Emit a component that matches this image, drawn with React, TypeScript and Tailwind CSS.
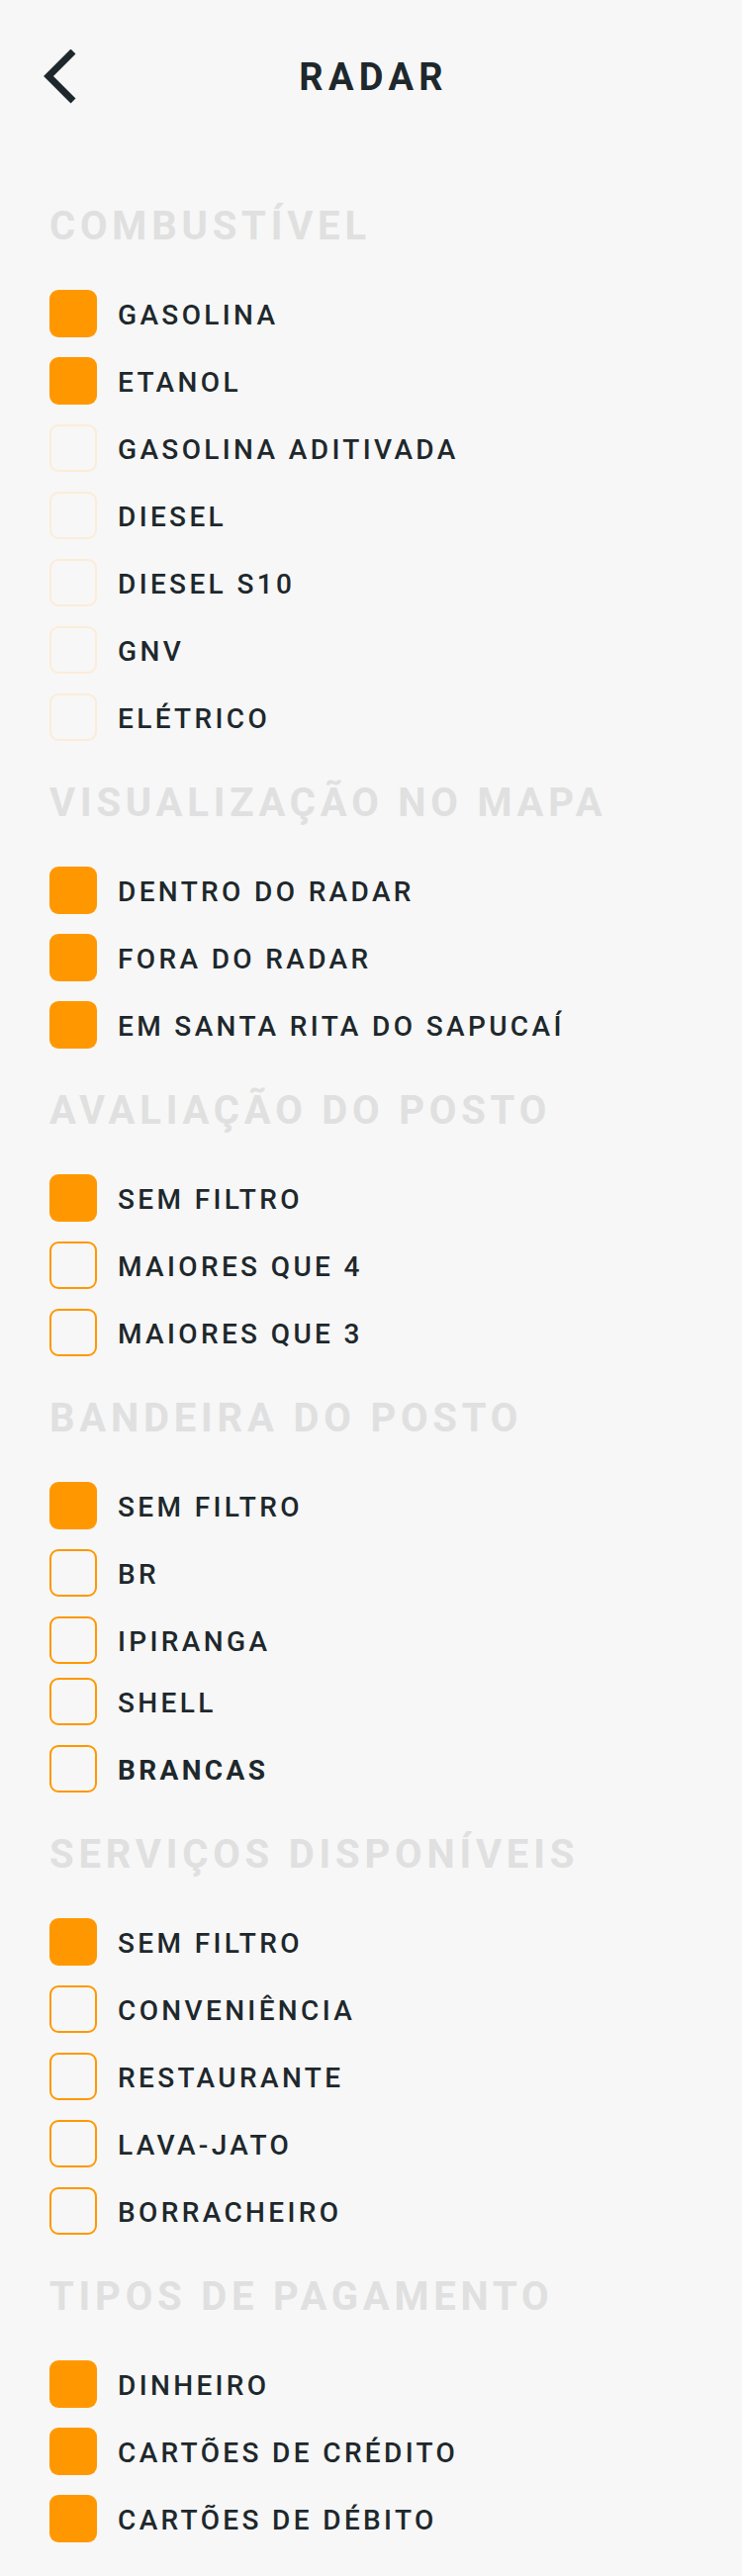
type Item = { label: string; checked: boolean; bold?: boolean; tight?: boolean }

type Section = { title: string; faint?: boolean; items: Item[] }

const sections: Section[] = [
  {
    title: 'COMBUSTÍVEL',
    faint: true,
    items: [
      { label: 'GASOLINA', checked: true },
      { label: 'ETANOL', checked: true },
      { label: 'GASOLINA ADITIVADA', checked: false },
      { label: 'DIESEL', checked: false },
      { label: 'DIESEL S10', checked: false },
      { label: 'GNV', checked: false },
      { label: 'ELÉTRICO', checked: false },
    ],
  },
  {
    title: 'VISUALIZAÇÃO NO MAPA',
    items: [
      { label: 'DENTRO DO RADAR', checked: true },
      { label: 'FORA DO RADAR', checked: true },
      { label: 'EM SANTA RITA DO SAPUCAÍ', checked: true },
    ],
  },
  {
    title: 'AVALIAÇÃO DO POSTO',
    items: [
      { label: 'SEM FILTRO', checked: true },
      { label: 'MAIORES QUE 4', checked: false },
      { label: 'MAIORES QUE 3', checked: false },
    ],
  },
  {
    title: 'BANDEIRA DO POSTO',
    items: [
      { label: 'SEM FILTRO', checked: true },
      { label: 'BR', checked: false },
      { label: 'IPIRANGA', checked: false },
      { label: 'SHELL', checked: false, tight: true },
      { label: 'BRANCAS', checked: false, bold: true },
    ],
  },
  {
    title: 'SERVIÇOS DISPONÍVEIS',
    items: [
      { label: 'SEM FILTRO', checked: true },
      { label: 'CONVENIÊNCIA', checked: false },
      { label: 'RESTAURANTE', checked: false },
      { label: 'LAVA-JATO', checked: false },
      { label: 'BORRACHEIRO', checked: false },
    ],
  },
  {
    title: 'TIPOS DE PAGAMENTO',
    items: [
      { label: 'DINHEIRO', checked: true },
      { label: 'CARTÕES DE CRÉDITO', checked: true },
      { label: 'CARTÕES DE DÉBITO', checked: true },
    ],
  },
]

function Box({ checked, faint }: { checked: boolean; faint?: boolean }) {
  if (checked) {
    return <div className="w-12 h-12 shrink-0 rounded-[9px] bg-[#ff9800]" />
  }
  return (
    <div
      className={
        faint
          ? 'w-12 h-12 shrink-0 rounded-[9px] border-2 border-[#fcecd8]'
          : 'w-12 h-12 shrink-0 rounded-[9px] border-2 border-[#ff9800]'
      }
    />
  )
}

export default function App() {
  return (
    <div className="min-h-screen w-full bg-[#f7f7f7] pt-[50px] pb-[35px] font-['Roboto',sans-serif]">
      <div className="h-14 px-[44px] grid grid-cols-[1fr_auto_1fr] items-center">
        <svg width="34" height="56" viewBox="0 0 34 56" className="text-[#1e282c]">
          <polyline
            points="30,2 5,27 30,52"
            fill="none"
            stroke="currentColor"
            strokeWidth="7"
            strokeLinejoin="miter"
          />
        </svg>
        <h1 className="text-[38px] leading-none font-bold tracking-[0.14em] mr-[-0.14em] text-[#1e282c]">
          RADAR
        </h1>
        <div />
      </div>

      <div className="mt-[99px] px-[50px] flex flex-col gap-[39px]">
        {sections.map((section) => (
          <div key={section.title} className="flex flex-col">
            <h2 className="h-12 flex items-center text-[40px] leading-none font-bold tracking-[0.12em] text-[#e0e0e0]">
              {section.title}
            </h2>
            <div className="mt-[40px] flex flex-col gap-5">
              {section.items.map((item) => (
                <div
                  key={item.label}
                  className={
                    item.tight
                      ? '-mt-[6px] flex items-center gap-[21px]'
                      : 'flex items-center gap-[21px]'
                  }
                >
                  <Box checked={item.checked} faint={section.faint} />
                  <span
                    className={
                      item.bold
                        ? 'pt-1 text-[28px] leading-none font-bold tracking-[0.12em] text-[#1e282c]'
                        : 'pt-1 text-[28px] leading-none font-medium tracking-[0.12em] text-[#1e282c]'
                    }
                  >
                    {item.label}
                  </span>
                </div>
              ))}
            </div>
          </div>
        ))}
      </div>
    </div>
  )
}
